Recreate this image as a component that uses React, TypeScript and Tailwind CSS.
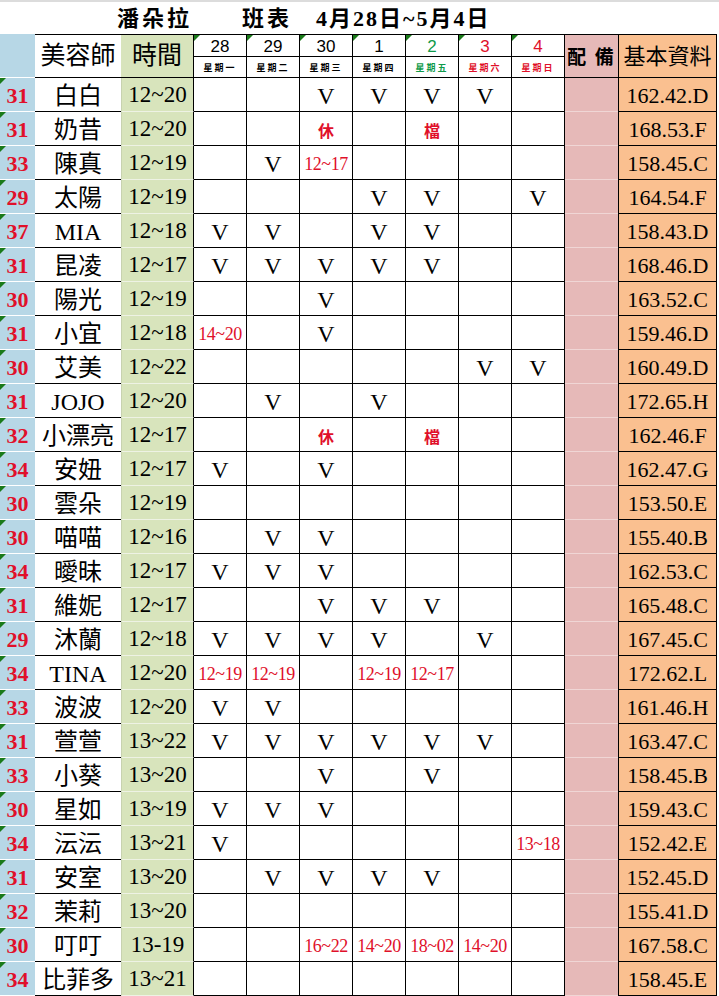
import React from "react";

type Row = { n: number; name: string; time: string; days: string[]; info: string };

const rows: Row[] = [
  { n: 31, name: "白白", time: "12~20", days: ["", "", "V", "V", "V", "V", ""], info: "162.42.D" },
  { n: 31, name: "奶昔", time: "12~20", days: ["", "", "休", "", "檔", "", ""], info: "168.53.F" },
  { n: 33, name: "陳真", time: "12~19", days: ["", "V", "12~17", "", "", "", ""], info: "158.45.C" },
  { n: 29, name: "太陽", time: "12~19", days: ["", "", "", "V", "V", "", "V"], info: "164.54.F" },
  { n: 37, name: "MIA", time: "12~18", days: ["V", "V", "", "V", "V", "", ""], info: "158.43.D" },
  { n: 31, name: "昆凌", time: "12~17", days: ["V", "V", "V", "V", "V", "", ""], info: "168.46.D" },
  { n: 30, name: "陽光", time: "12~19", days: ["", "", "V", "", "", "", ""], info: "163.52.C" },
  { n: 31, name: "小宜", time: "12~18", days: ["14~20", "", "V", "", "", "", ""], info: "159.46.D" },
  { n: 30, name: "艾美", time: "12~22", days: ["", "", "", "", "", "V", "V"], info: "160.49.D" },
  { n: 31, name: "JOJO", time: "12~20", days: ["", "V", "", "V", "", "", ""], info: "172.65.H" },
  { n: 32, name: "小漂亮", time: "12~17", days: ["", "", "休", "", "檔", "", ""], info: "162.46.F" },
  { n: 34, name: "安妞", time: "12~17", days: ["V", "", "V", "", "", "", ""], info: "162.47.G" },
  { n: 30, name: "雲朵", time: "12~19", days: ["", "", "", "", "", "", ""], info: "153.50.E" },
  { n: 30, name: "喵喵", time: "12~16", days: ["", "V", "V", "", "", "", ""], info: "155.40.B" },
  { n: 34, name: "曖昧", time: "12~17", days: ["V", "V", "V", "", "", "", ""], info: "162.53.C" },
  { n: 31, name: "維妮", time: "12~17", days: ["", "", "V", "V", "V", "", ""], info: "165.48.C" },
  { n: 29, name: "沐蘭", time: "12~18", days: ["V", "V", "V", "V", "", "V", ""], info: "167.45.C" },
  { n: 34, name: "TINA", time: "12~20", days: ["12~19", "12~19", "", "12~19", "12~17", "", ""], info: "172.62.L" },
  { n: 33, name: "波波", time: "12~20", days: ["V", "V", "", "", "", "", ""], info: "161.46.H" },
  { n: 31, name: "萱萱", time: "13~22", days: ["V", "V", "V", "V", "V", "V", ""], info: "163.47.C" },
  { n: 33, name: "小葵", time: "13~20", days: ["", "", "V", "", "V", "", ""], info: "158.45.B" },
  { n: 30, name: "星如", time: "13~19", days: ["V", "V", "V", "", "", "", ""], info: "159.43.C" },
  { n: 34, name: "沄沄", time: "13~21", days: ["V", "", "", "", "", "", "13~18"], info: "152.42.E" },
  { n: 31, name: "安室", time: "13~20", days: ["", "V", "V", "V", "V", "", ""], info: "152.45.D" },
  { n: 32, name: "茉莉", time: "13~20", days: ["", "", "", "", "", "", ""], info: "155.41.D" },
  { n: 30, name: "叮叮", time: "13-19", days: ["", "", "16~22", "14~20", "18~02", "14~20", ""], info: "167.58.C" },
  { n: 34, name: "比菲多", time: "13~21", days: ["", "", "", "", "", "", ""], info: "158.45.E" },
];

const headDays = [
  { d: "28", w: "星期一", c: "text-black" },
  { d: "29", w: "星期二", c: "text-black" },
  { d: "30", w: "星期三", c: "text-black" },
  { d: "1", w: "星期四", c: "text-black" },
  { d: "2", w: "星期五", c: "text-[#0f9a4a]" },
  { d: "3", w: "星期六", c: "text-[#e0102a]" },
  { d: "4", w: "星期日", c: "text-[#e0102a]" },
];

const serif = "font-['Liberation_Serif','Noto_Sans_CJK_TC',serif]";

function Tri() {
  return (
    <span className="absolute left-0 top-0 w-0 h-0 border-t-[6px] border-t-[#1a7a1a] border-r-[6px] border-r-transparent" />
  );
}

function DayCell({ v }: { v: string }) {
  let content: React.ReactNode = null;
  if (v === "V") {
    content = <span className={`${serif} text-[24px] text-black leading-none`}>V</span>;
  } else if (v === "休" || v === "檔") {
    content = (
      <span className="font-['Noto_Sans_CJK_TC',sans-serif] font-bold text-[16px] text-[#e0102a] leading-none">{v}</span>
    );
  } else if (v) {
    content = <span className={`${serif} text-[18px] text-[#e0102a] leading-none tracking-[-0.4px]`}>{v}</span>;
  }
  return (
    <div className="w-[53px] h-[34px] flex items-center justify-center border-r border-b border-black bg-white pt-[2px]">
      {content}
    </div>
  );
}

export default function App() {
  return (
    <div className="w-[719px] h-[996px] bg-white overflow-hidden">
      {/* title */}
      <div className={`h-[34px] border-t-2 border-[#dcdcdc] flex items-center ${serif} font-bold text-[22px] text-black`}>
        <span className="ml-[117px] tracking-[3px]">潘朵拉</span>
        <span className="ml-[50px] tracking-[3px]">班表</span>
        <span className="ml-[24px] tracking-[2px]">4月28日~5月4日</span>
      </div>
      {/* header */}
      <div className="flex h-[44px]">
        <div className="w-[35px] h-full bg-[#b7d7e6] border-b border-white" />
        <div className={`w-[86px] h-full border-t border-b border-black flex items-center justify-center ${serif} text-[25px] text-black`}>
          美容師
        </div>
        <div className={`w-[73px] h-full bg-[#d8e4bc] border-t border-black border-r border-b flex items-center justify-center ${serif} text-[25px] text-black`}>
          時間
        </div>
        {headDays.map((h) => (
          <div key={h.d} className="relative w-[53px] h-full border-t border-r border-b border-black flex flex-col">
            <Tri />
            <div className={`h-[22px] border-b border-black flex items-center justify-center font-['Liberation_Sans',sans-serif] text-[17px] leading-none pt-[2px] ${h.c}`}>
              {h.d}
            </div>
            <div className={`flex-1 flex items-center justify-center font-['Noto_Sans_CJK_TC',sans-serif] font-bold text-[9px] tracking-[2px] leading-none ${h.c}`}>
              {h.w}
            </div>
          </div>
        ))}
        <div className="w-[53px] h-full bg-[#e6b9b8] border-t border-b border-black flex items-center justify-center font-['Noto_Sans_CJK_TC',sans-serif] font-bold text-[19px] text-black tracking-[2px]">
          配 備
        </div>
        <div className={`w-[99px] h-full bg-[#fac090] border border-black flex items-center justify-center ${serif} text-[22px] text-black`}>
          基本資料
        </div>
      </div>
      {/* rows */}
      {rows.map((r, i) => (
        <div key={i} className="flex h-[34px]">
          <div className={`relative w-[35px] h-full bg-[#b7d7e6] border-b border-white flex items-center justify-center ${serif} font-bold text-[22px] text-[#e0102a] pt-[2px]`}>
            <Tri />
            {r.n}
          </div>
          <div className={`w-[86px] h-full border-b border-black flex items-center justify-center ${serif} text-[24px] text-black pt-[2px] whitespace-nowrap`}>
            {r.name}
          </div>
          <div className={`w-[73px] h-full bg-[#d8e4bc] border-l border-[#c8d2b0] border-b border-b-[#eef2e4] border-r border-r-black flex items-center justify-center ${serif} text-[23px] text-black pt-[2px]`}>
            {r.time}
          </div>
          {r.days.map((d, j) => (
            <DayCell key={j} v={d} />
          ))}
          <div className="w-[53px] h-full bg-[#e6b9b8] border-b border-[#f0d6d5]" />
          <div className={`w-[99px] h-full bg-[#fac090] border-l border-r border-b border-black flex items-center justify-center ${serif} text-[22px] text-black pt-[2px]`}>
            {r.info}
          </div>
        </div>
      ))}
    </div>
  );
}
